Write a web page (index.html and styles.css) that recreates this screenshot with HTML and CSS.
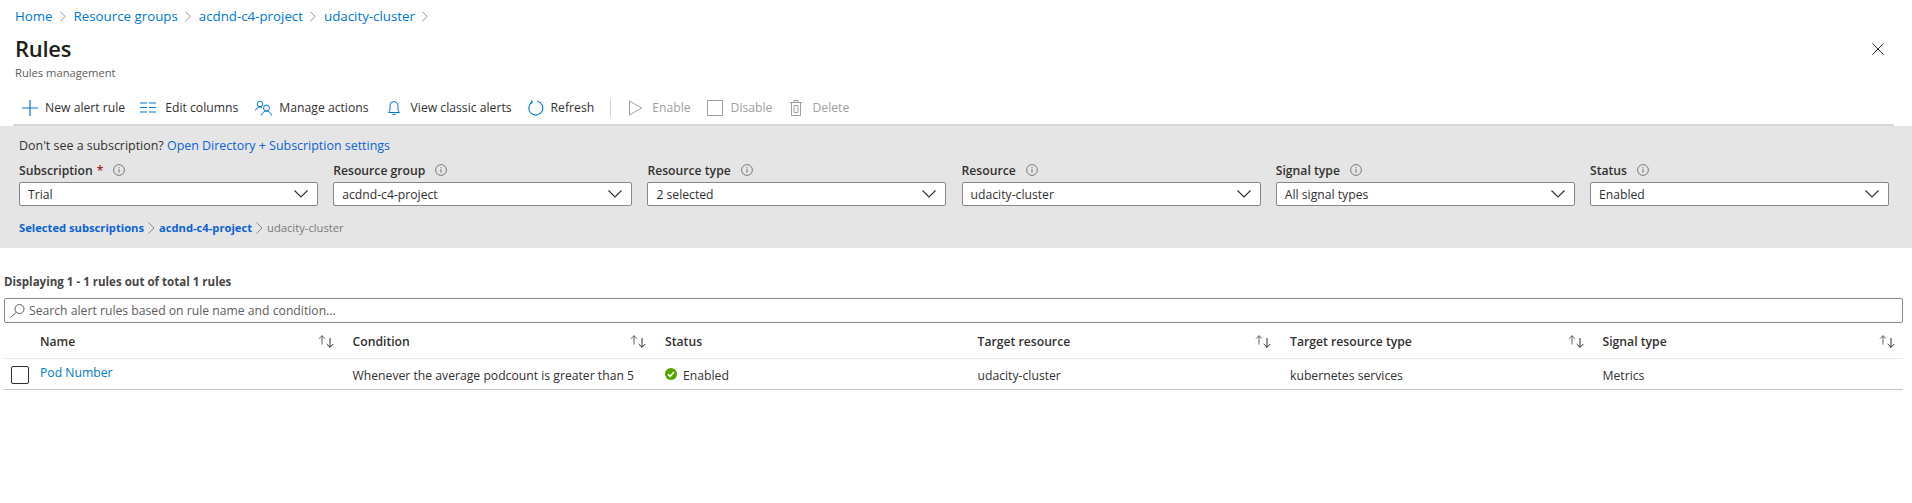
FILE: index.html
```html
<!DOCTYPE html>
<html lang="en">
<head>
    <meta charset="UTF-8">
    <title>Rules - Rules management</title>
    <link rel="stylesheet" href="styles.css">
</head>
<body>
    <svg class="defs" width="0" height="0">
        <symbol id="chev" viewBox="0 0 14 8"><path d="M.5.5 7 7 13.500.5" fill="none" stroke="#323130" stroke-width="1.100"/></symbol>
        <symbol id="info" viewBox="0 0 12 12"><circle cx="6" cy="6" r="5.400" fill="none" stroke="#7a7a7a"/><path d="M6 5.200v3.400M6 3.200v1" stroke="#7a7a7a" stroke-width="1.200"/></symbol>
        <symbol id="sort" viewBox="0 0 16 13"><path d="M4 9.500V.7M1 3.700 4 .7l3 3" fill="none" stroke="#605e5c"/><path d="M12 3v9.300M8.700 9l3.300 3.300L15.300 9" fill="none" stroke="#323130"/></symbol>
        <symbol id="crumb" viewBox="0 0 7 12"><path d="M.5.5 6 6 .5 11.500" fill="none" stroke="#8a8886"/></symbol>
    </svg>

    <nav class="breadcrumb">
        <a href="#">Home</a><svg class="crumb"><use href="#crumb"/></svg>
        <a href="#">Resource groups</a><svg class="crumb"><use href="#crumb"/></svg>
        <a href="#">acdnd-c4-project</a><svg class="crumb"><use href="#crumb"/></svg>
        <a href="#">udacity-cluster</a><svg class="crumb"><use href="#crumb"/></svg>
    </nav>

    <header class="title-bar">
        <div>
            <h1>Rules</h1>
            <p class="subtitle">Rules management</p>
        </div>
        <svg class="close" viewBox="0 0 13 13"><path d="M.5.5l12 12M12.500.5l-12 12" stroke="#201f1e" fill="none"/></svg>
    </header>

    <div class="toolbar">
        <button class="tool tool-new">
            <svg class="icon" width="16" height="16" viewBox="0 0 16 16"><path d="M8 0v16M0 8h16" stroke="#0078d4" stroke-width="1.200"/></svg>New alert rule
        </button>
        <button class="tool tool-columns">
            <svg class="icon" width="16" height="11" viewBox="0 0 16 11"><path d="M0 1h7M9 1h7M0 5.500h7M9 5.500h7M0 10h7M9 10h7" stroke="#0078d4"/></svg>Edit columns
        </button>
        <button class="tool tool-actions">
            <svg class="icon" width="18" height="16" viewBox="0 0 18 16" fill="none" stroke="#0078d4"><circle cx="5" cy="4" r="2.800"/><path d="M.5 10.500C1 8.500 2.500 7 5 7c.8 0 1.500.2 2 .4"/><circle cx="11.500" cy="8" r="3"/><path d="M6.500 15.500c.5-2.500 2.500-4.500 5-4.500s4.500 2 5 4.500"/></svg>Manage actions
        </button>
        <button class="tool tool-classic">
            <svg class="icon" width="12" height="16" viewBox="0 0 12 16" fill="none" stroke="#0078d4"><path d="M.5 12.500h11c-1-1-1.500-2-1.500-3.500V5.500a4 4 0 0 0-8 0V9c0 1.500-.5 2.500-1.500 3.500zM4.500 14.500h3"/></svg>View classic alerts
        </button>
        <button class="tool tool-refresh">
            <svg class="icon" width="16" height="16" viewBox="0 0 16 16" fill="none" stroke="#0078d4" stroke-width="1.100"><path d="M9.500 1.300a7 7 0 1 1-5.500.9"/><path d="M3.300 .3 4.300 2.400 2 3.200"/></svg>Refresh
        </button>
        <span class="tool-sep"></span>
        <button class="tool tool-off tool-enable">
            <svg class="icon" width="13" height="16" viewBox="0 0 13 16"><path d="M.5 1v14L12.500 8z" fill="none" stroke="#a19f9d"/></svg>Enable
        </button>
        <button class="tool tool-off tool-disable">
            <svg class="icon" width="16" height="16" viewBox="0 0 16 16"><rect x=".5" y=".5" width="15" height="15" fill="none" stroke="#a19f9d"/></svg>Disable
        </button>
        <button class="tool tool-off tool-delete">
            <svg class="icon" width="12" height="16" viewBox="0 0 12 16" fill="none" stroke="#a19f9d"><path d="M0 2.500h12M4 2.500V.5h4v2M1.500 2.500v13h9v-13M4 5.500h4v7H4z"/></svg>Delete
        </button>
    </div>

    <section class="filters">
        <p class="hint">Don't see a subscription? <a href="#">Open Directory + Subscription settings</a></p>
        <div class="filter-row">
            <div class="filter">
                <label>Subscription <span class="req">*</span><svg class="info"><use href="#info"/></svg></label>
                <div class="select">Trial<svg class="chev"><use href="#chev"/></svg></div>
            </div>
            <div class="filter">
                <label>Resource group<svg class="info"><use href="#info"/></svg></label>
                <div class="select">acdnd-c4-project<svg class="chev"><use href="#chev"/></svg></div>
            </div>
            <div class="filter">
                <label>Resource type<svg class="info"><use href="#info"/></svg></label>
                <div class="select">2 selected<svg class="chev"><use href="#chev"/></svg></div>
            </div>
            <div class="filter">
                <label>Resource<svg class="info"><use href="#info"/></svg></label>
                <div class="select">udacity-cluster<svg class="chev"><use href="#chev"/></svg></div>
            </div>
            <div class="filter">
                <label>Signal type<svg class="info"><use href="#info"/></svg></label>
                <div class="select">All signal types<svg class="chev"><use href="#chev"/></svg></div>
            </div>
            <div class="filter">
                <label>Status<svg class="info"><use href="#info"/></svg></label>
                <div class="select">Enabled<svg class="chev"><use href="#chev"/></svg></div>
            </div>
        </div>
        <div class="scope">
            <a href="#">Selected subscriptions</a><svg class="scope-sep"><use href="#crumb"/></svg>
            <a href="#">acdnd-c4-project</a><svg class="scope-sep"><use href="#crumb"/></svg>
            <span>udacity-cluster</span>
        </div>
    </section>

    <main class="results">
        <p class="count">Displaying 1 - 1 rules out of total 1 rules</p>
        <div class="search">
            <svg width="15" height="14" viewBox="0 0 15 14" fill="none" stroke="#605e5c"><circle cx="9.500" cy="5" r="4.500"/><path d="M6.300 8.300 .5 13.500"/></svg>
            Search alert rules based on rule name and condition...
        </div>
        <div class="grid grid-head">
            <div class="cell check-cell"></div>
            <div class="cell">Name<svg class="sort"><use href="#sort"/></svg></div>
            <div class="cell">Condition<svg class="sort"><use href="#sort"/></svg></div>
            <div class="cell">Status</div>
            <div class="cell">Target resource<svg class="sort"><use href="#sort"/></svg></div>
            <div class="cell">Target resource type<svg class="sort"><use href="#sort"/></svg></div>
            <div class="cell">Signal type<svg class="sort"><use href="#sort"/></svg></div>
        </div>
        <div class="grid grid-row">
            <div class="cell check-cell"><span class="checkbox"></span></div>
            <div class="cell name-cell"><a href="#">Pod Number</a></div>
            <div class="cell">Whenever the average podcount is greater than 5</div>
            <div class="cell">
                <svg class="ok" width="12" height="12" viewBox="0 0 12 12"><circle cx="6" cy="6" r="6" fill="#57a300"/><path d="M3 6.200 5.200 8.300 9 4" fill="none" stroke="#fff" stroke-width="1.500"/></svg>
                Enabled
            </div>
            <div class="cell">udacity-cluster</div>
            <div class="cell">kubernetes services</div>
            <div class="cell">Metrics</div>
        </div>
    </main>
</body>
</html>
```

FILE: styles.css
```css
body {
    margin: 0;
    font-family: "Open Sans", "Noto Sans", sans-serif;
    font-size: 12.200px;
    color: #323130;
    background-color: #fff;
}
a {
    color: #0078d4;
    text-decoration: none;
}
.defs {
    position: absolute;
}

/* breadcrumb + title */
.breadcrumb {
    display: flex;
    align-items: center;
    height: 32px;
    padding-left: 15px;
    font-size: 13.300px;
}
.crumb {
    width: 6px;
    height: 11px;
    margin: 0 8px 0 7px;
}
.title-bar {
    display: flex;
    justify-content: space-between;
    height: 48px;
    padding: 1px 28px 0 15px;
    box-sizing: border-box;
}
h1 {
    margin: 0;
    font-size: 22px;
    line-height: 30px;
    font-weight: 600;
    letter-spacing: -0.3px;
    color: #201f1e;
}
.subtitle {
    margin: 3px 0 0;
    font-size: 11.200px;
    line-height: 14px;
    color: #605e5c;
}
.close {
    width: 12px;
    height: 12px;
    margin-top: 10px;
}

/* toolbar */
.toolbar {
    display: flex;
    align-items: center;
    height: 46px;
    margin: 0 18px 0 13px;
    padding-top: 11px;
    border-bottom: 2px solid #d8d8d8;
    box-sizing: border-box;
}
.tool {
    display: flex;
    align-items: center;
    padding: 0;
    border: none;
    background: none;
    font: inherit;
    color: #323130;
    white-space: nowrap;
}
.icon {
    flex: none;
}
.tool-new { margin-left: 9px; }
.tool-new .icon { margin-right: 7px; }
.tool-columns { margin-left: 15px; }
.tool-columns .icon { margin-right: 9px; }
.tool-actions { margin-left: 17px; }
.tool-actions .icon { margin-right: 6px; }
.tool-classic { margin-left: 19px; }
.tool-classic .icon { margin-right: 11px; }
.tool-refresh { margin-left: 16px; }
.tool-refresh .icon { margin-right: 7px; }
.tool-sep {
    width: 1px;
    height: 18px;
    margin-left: 16px;
    background-color: #d0d0d0;
}
.tool-off { color: #a19f9d; }
.tool-enable { margin-left: 18px; }
.tool-enable .icon { margin-right: 10px; }
.tool-disable { margin-left: 16px; }
.tool-disable .icon { margin-right: 8px; }
.tool-delete { margin-left: 18px; }
.tool-delete .icon { margin-right: 10px; }

/* filter panel */
.filters {
    height: 122px;
    box-sizing: border-box;
    padding: 11px 23px 0 19px;
    background-color: #e5e5e5;
}
.hint {
    margin: 0;
    line-height: 18px;
    font-size: 12.450px;
}
.hint a, .scope a {
    color: #0b62d6;
}
.filter-row {
    display: grid;
    grid-template-columns: repeat(6, 299px);
    column-gap: 15.200px;
    margin-top: 6px;
}
.filter label {
    display: flex;
    align-items: center;
    height: 18px;
    font-weight: 600;
}
.req {
    margin-left: 4px;
    color: #a4262c;
}
.info {
    width: 12px;
    height: 12px;
    margin-left: 10px;
}
.select {
    display: flex;
    align-items: center;
    justify-content: space-between;
    height: 24px;
    box-sizing: border-box;
    margin-top: 3px;
    padding: 0 9px 0 8px;
    background-color: #fff;
    border: 1px solid #8a8886;
    border-radius: 2px;
}
.chev {
    width: 14px;
    height: 8px;
}
.scope {
    display: flex;
    align-items: center;
    margin-top: 14px;
    font-size: 11.200px;
    line-height: 16px;
    color: #7a7a7a;
}
.scope a {
    font-weight: 700;
}
.scope-sep {
    width: 7px;
    height: 12px;
    margin: 0 4px;
}

/* results */
.results {
    padding: 26px 9px 0 4px;
}
.count {
    margin: 0;
    font-size: 11.550px;
    line-height: 16px;
    font-weight: 700;
    color: #484644;
}
.search {
    display: flex;
    align-items: center;
    gap: 4px;
    height: 25px;
    box-sizing: border-box;
    margin-top: 8px;
    padding-left: 5px;
    border: 1px solid #8a8886;
    border-radius: 2px;
    color: #605e5c;
}
.grid {
    display: grid;
    grid-template-columns: 36px repeat(5, 312.500px) 1fr;
    box-sizing: border-box;
    align-items: center;
}
.grid-head {
    height: 36px;
    padding-top: 1px;
    border-bottom: 1px solid #edebe9;
    font-weight: 600;
}
.grid-row {
    height: 31px;
    border-bottom: 1px solid #c8c6c4;
}
.cell {
    display: flex;
    align-items: center;
    justify-content: space-between;
    padding-right: 19px;
    white-space: nowrap;
}
.cell:last-child {
    padding-right: 8px;
}
.grid-row .cell {
    justify-content: flex-start;
    padding-top: 2px;
}
.grid-row .name-cell {
    padding-top: 0;
    margin-top: -3px;
}
.grid .check-cell {
    padding-right: 0;
}
.sort {
    width: 16px;
    height: 13px;
}
.checkbox {
    flex: none;
    width: 18px;
    height: 18px;
    margin-left: 7px;
    box-sizing: border-box;
    border: 1px solid #323130;
    border-radius: 2px;
}
.ok {
    margin-right: 6px;
    margin-top: -2px;
}
```
